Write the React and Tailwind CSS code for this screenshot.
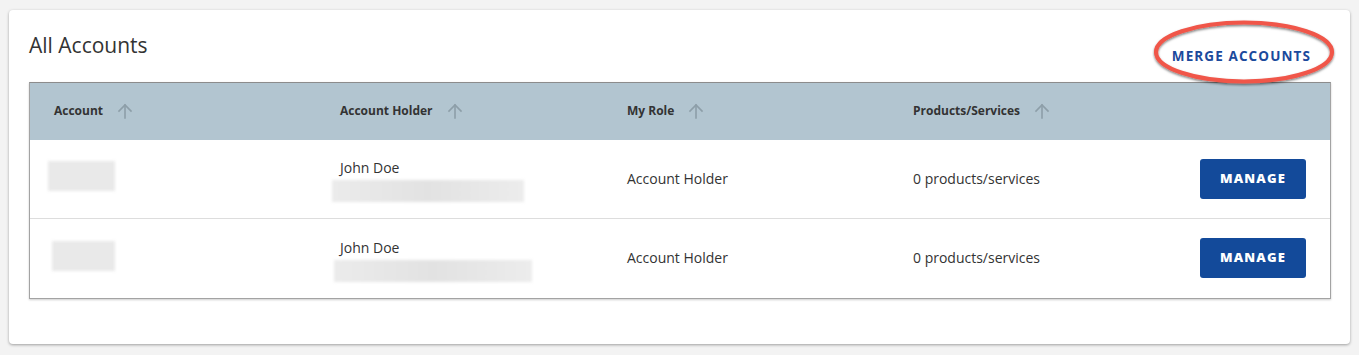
import React from "react";

const Arrow = () => (
  <svg width="16" height="16" viewBox="0 0 16 16" className="ml-[14px]" fill="none" stroke="#8d9ea8" strokeWidth="1.6" strokeLinecap="square">
    <path d="M8 2 L8 15" />
    <path d="M2 8 L8 2 L14 8" />
  </svg>
);

const HeadCell = ({ children }) => (
  <div className="flex items-center pl-[24px] text-[12px] font-bold text-[#333]">
    {children}
    <Arrow />
  </div>
);

const ManageBtn = () => (
  <button className="w-[106px] h-[40px] rounded-[3px] bg-[#134a9a] text-white text-[13px] font-extrabold tracking-[1.2px]">
    MANAGE
  </button>
);

const Row = ({ acc, bar, last }) => (
  <div className={"grid grid-cols-[286px_287px_286px_286px_1fr] h-[79px] pb-[2px] items-center text-[14px] text-[#333] " + (last ? "" : "border-b border-[#dddddd]")}>
    <div className="pl-[24px]">
      <div className={"h-[30px] bg-[#e9e9e9] blur-[1.5px] " + acc} />
    </div>
    <div className="pl-[24px] flex flex-col pt-[4px]">
      <div className="leading-[20px]">John Doe</div>
      <div className={"h-[22px] mt-[2px] bg-gradient-to-r from-[#ebebeb] via-[#e2e2e2] to-[#ececec] blur-[1.5px] " + bar} />
    </div>
    <div className="pl-[24px]">Account Holder</div>
    <div className="pl-[24px]">0 products/services</div>
    <div className={"flex justify-end pr-[24px] " + (last ? "pt-0" : "pt-[2px]")}>
      <ManageBtn />
    </div>
  </div>
);

export default function App() {
  return (
    <div className="w-[1359px] h-[355px] bg-[#f3f3f3] pt-[10px] pl-[9px]" style={{ fontFamily: '"Open Sans", "Liberation Sans", sans-serif' }}>
      <div className="w-[1341px] h-[334px] bg-white rounded-[4px] shadow-[0_1px_3px_rgba(0,0,0,0.35)] pl-[20px] pr-[19px]">
        <div className="flex justify-between h-[72px]">
          <h1 className="mt-[21px] text-[21px] leading-[28px] text-[#333]">All Accounts</h1>
          <div className="relative mt-[33px] mr-[20px] h-[20px]">
            <svg className="absolute left-[-20px] top-[-24px]" width="184" height="68" viewBox="0 0 184 68" fill="none">
              <defs>
                <filter id="sh" x="-10%" y="-20%" width="120%" height="150%">
                  <feDropShadow dx="0" dy="1.5" stdDeviation="1.2" floodColor="#000" floodOpacity="0.5" />
                </filter>
              </defs>
              <ellipse cx="92" cy="33" rx="88" ry="29.5" stroke="#f0564a" strokeWidth="4.2" filter="url(#sh)" />
            </svg>
            <span className="relative text-[13.5px] leading-[20px] font-bold tracking-[1.1px] text-[#1b4a9c]">MERGE ACCOUNTS</span>
          </div>
        </div>
        <div className="border border-[#a3a3a3] border-t-[#8c8c8c] shadow-[0_1px_2px_rgba(0,0,0,0.2)]">
          <div className="grid grid-cols-[286px_287px_286px_286px_1fr] h-[57px] pb-[2px] bg-[#b2c5d0] items-center">
            <HeadCell>Account</HeadCell>
            <HeadCell>Account Holder</HeadCell>
            <HeadCell>My Role</HeadCell>
            <HeadCell>Products/Services</HeadCell>
            <div />
          </div>
          <Row acc="w-[67px] -ml-[6px] mt-[-4px]" bar="w-[192px] -ml-[8px]" />
          <Row acc="w-[63px] -ml-[2px] mt-[-4px]" bar="w-[198px] -ml-[6px]" last />
        </div>
      </div>
    </div>
  );
}
